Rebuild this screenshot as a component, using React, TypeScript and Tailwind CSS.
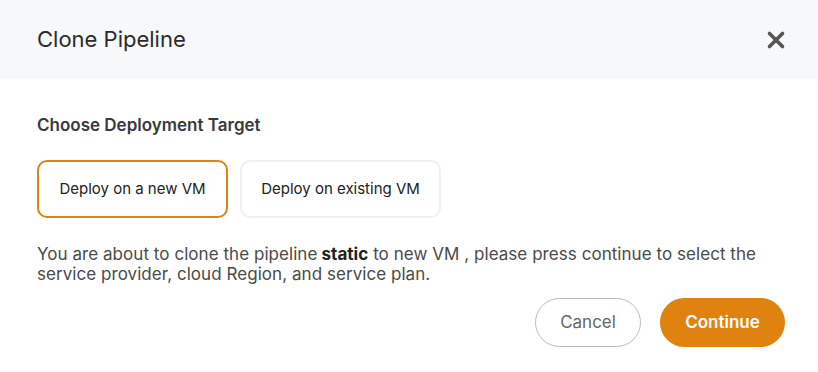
import React from "react";

export default function App() {
  return (
    <div className="w-[818px] h-[372px] bg-white font-['Inter',sans-serif]">
      <div className="h-[79px] bg-[#f7f8fa] flex items-center justify-between pl-[37px] pr-[32px] rounded-t-[4px]">
        <h1 className="text-[22px] text-[#2b2b2b] font-normal">Clone Pipeline</h1>
        <svg width="20" height="20" viewBox="0 0 20 20" className="text-[#555]">
          <path d="M3.5 3.5 L16.5 16.5 M16.5 3.5 L3.5 16.5" stroke="currentColor" strokeWidth="3.6" strokeLinecap="round" />
        </svg>
      </div>
      <div className="px-[37px] pt-[36px]">
        <div className="text-[17px] font-semibold text-[#3a3a3a] leading-[20px]">Choose Deployment Target</div>
        <div className="flex gap-[12px] mt-[25px]">
          <button className="h-[58px] w-[191px] rounded-[10px] border-2 border-[#df820f] text-[15px] text-[#222] bg-white">
            Deploy on a new VM
          </button>
          <button className="h-[58px] w-[201px] rounded-[10px] border-2 border-[#f0f0f0] text-[15px] text-[#222] bg-white">
            Deploy on existing VM
          </button>
        </div>
        <p className="mt-[26px] text-[17px] leading-[20px] text-[#4a4a4a] w-[744px] tracking-[0.05px]">
          You are about to clone the pipeline<b className="text-[#222] font-bold"> static</b> to new VM , please press continue to select the service provider, cloud Region, and service plan.
        </p>
        <div className="flex justify-end gap-[19px] mt-[14px] mr-[-4px]">
          <button className="h-[49px] w-[106px] rounded-full border border-[#bbb] text-[17px] text-[#666] bg-white">Cancel</button>
          <button className="h-[49px] w-[125px] rounded-full bg-[#e0820f] text-[17px] font-semibold text-white">Continue</button>
        </div>
      </div>
    </div>
  );
}
